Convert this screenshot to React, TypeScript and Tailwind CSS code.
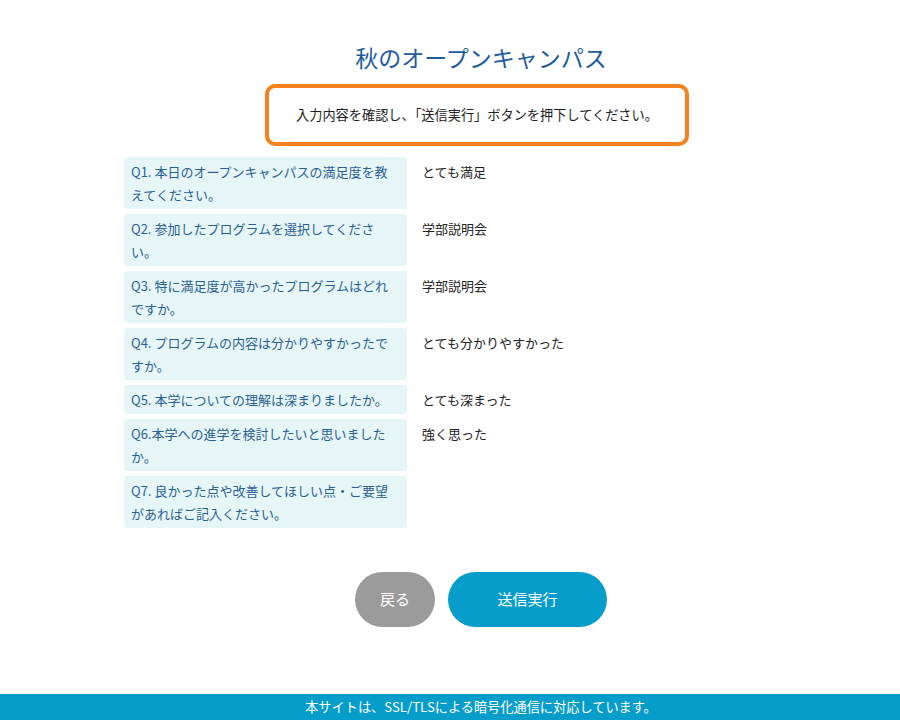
const rows = [
  { q: "Q1. 本日のオープンキャンパスの満足度を教えてください。", a: "とても満足" },
  { q: "Q2. 参加したプログラムを選択してください。", a: "学部説明会" },
  { q: "Q3. 特に満足度が高かったプログラムはどれですか。", a: "学部説明会" },
  { q: "Q4. プログラムの内容は分かりやすかったですか。", a: "とても分かりやすかった" },
  { q: "Q5. 本学についての理解は深まりましたか。", a: "とても深まった" },
  { q: "Q6.本学への進学を検討したいと思いましたか。", a: "強く思った" },
  { q: "Q7. 良かった点や改善してほしい点・ご要望があればご記入ください。", a: "" },
];

export default function App() {
  return (
    <div
      className="min-h-[720px] bg-white flex flex-col"
      style={{ fontFamily: '"Noto Sans CJK JP", "Noto Sans", sans-serif' }}
    >
      <main className="pl-[62px] pt-[42px]">
        <div className="mx-auto w-[714px]">
          <h1 className="text-center text-[23px] leading-[30px] text-[#1d5c9e]">
            秋のオープンキャンパス
          </h1>

          {/* notice box */}
          <div className="ml-[141px] mt-[12px] flex h-[62px] w-[424px] items-center justify-center rounded-[10px] border-[4px] border-[#f6821f] text-[13.2px] text-[#222]">
            入力内容を確認し、「送信実行」ボタンを押下してください。
          </div>

          <dl className="mt-[11px] flex flex-col gap-[5px]">
            {rows.map((r) => (
              <div key={r.q} className="flex gap-[15px]">
                <dt className="w-[283px] shrink-0 rounded-[4px] bg-[#e6f6f6] px-[7px] py-[3px] text-[13px] leading-[23px] text-[#2a5f94]">
                  {r.q}
                </dt>
                <dd className="pt-[3px] text-[13px] leading-[23px] text-[#222]">{r.a}</dd>
              </div>
            ))}
          </dl>

          <div className="mt-[44px] flex justify-center gap-[13px]">
            <button className="h-[55px] w-[80px] rounded-full bg-[#9b9b9b] text-[15px] text-white">
              戻る
            </button>
            <button className="h-[55px] w-[159px] rounded-full bg-[#079dcb] text-[15px] text-white">
              送信実行
            </button>
          </div>
        </div>
      </main>

      <footer className="mt-auto flex h-[26px] items-center justify-center bg-[#079dcb] pl-[62px] text-[13.2px] text-white">
        本サイトは、SSL/TLSによる暗号化通信に対応しています。
      </footer>
    </div>
  );
}
